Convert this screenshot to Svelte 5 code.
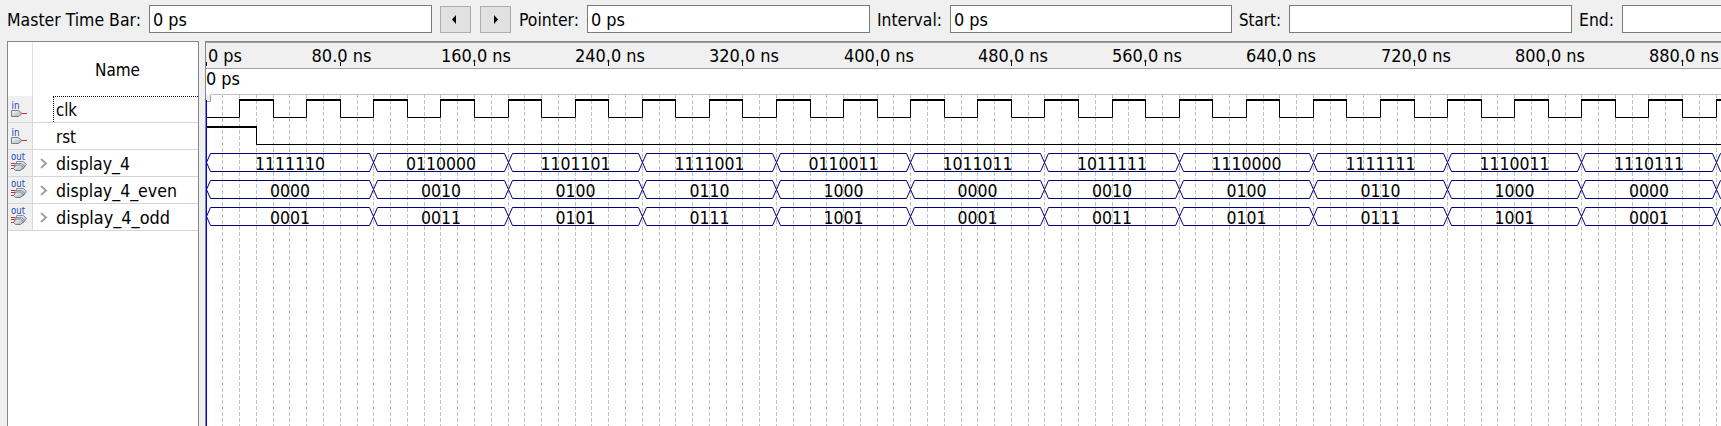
<script>
  const origin = 206;
  const unit = 16.778;
  const at = (n) => Math.floor(origin + n * unit) - 205;

  const fields = [
    { label: 'Master Time Bar:', value: '0 ps', w: 134, box: 283, gap: 8 },
    { label: 'Pointer:', value: '0 ps', w: 60, box: 283, gap: 8 },
    { label: 'Interval:', value: '0 ps', w: 65, box: 282, gap: 8, lead: 7 },
    { label: 'Start:', value: '', w: 42, box: 283, gap: 8, lead: 7 },
    { label: 'End:', value: '', w: 35, box: 283, gap: 8, lead: 7 }
  ];

  const signals = [
    { name: 'clk', out: false, w: 21 },
    { name: 'rst', out: false, w: 20 },
    { name: 'display_4', out: true, w: 74 },
    { name: 'display_4_even', out: true, w: 121 },
    { name: 'display_4_odd', out: true, w: 114 }
  ];

  const grid = Array.from({ length: 90 }, (_, i) => i + 1);
  const marks = Array.from({ length: 11 }, (_, i) => (i + 1) * 8);
  const edges = [0, 10, 18, 26, 34, 42, 50, 58, 66, 74, 82, 90, 98];

  let clock = `M1 117.5`;
  for (let n = 2; n <= 90; n += 2) {
    clock += `H${at(n) + 0.5}V${n % 4 === 2 ? 99.5 : 117.5}`;
  }
  clock += 'H1516';
  const highs = [];
  for (let n = 2; n <= 90; n += 4) highs.push([at(n), at(n + 2)]);

  const buses = [
    { y: 153, values: ['1111110', '0110000', '1101101', '1111001', '0110011', '1011011', '1011111', '1110000', '1111111', '1110011', '1110111'] },
    { y: 180, values: ['0000', '0010', '0100', '0110', '1000', '0000', '0010', '0100', '0110', '1000', '0000'] },
    { y: 207, values: ['0001', '0011', '0101', '0111', '1001', '0001', '0011', '0101', '0111', '1001', '0001'] }
  ];

  function hexes(y) {
    let d = '';
    for (let i = 0; i < edges.length - 1; i++) {
      const a = at(edges[i]) + 0.5;
      const b = at(edges[i + 1]) + 0.5;
      const t = y + 0.5;
      d += `M${a} ${t + 9}L${a + 4} ${t}H${b - 4}L${b} ${t + 9}`;
      d += `M${a} ${t + 9}L${a + 4} ${t + 18}H${b - 4}L${b} ${t + 9}`;
    }
    return d;
  }
</script>

{#snippet fit(text, w)}
  <svg class="fit" width={w} height="22"><text x="0" y="17" textLength={w} lengthAdjust="spacingAndGlyphs">{text}</text></svg>
{/snippet}

<main>
  <header>
    {#each fields as f, i}
      <label style:width="{f.w}px" style:margin-right="{f.gap}px" style:margin-left="{i ? (f.lead ?? 8) : 0}px">{@render fit(f.label, f.w)}</label>
      <div class="field" style:width="{f.box}px">{#if f.value}{@render fit(f.value, 34)}{/if}</div>
      {#if i === 0}
        <button aria-label="Previous"><svg width="29" height="25"><path d="M15 8V17L11 12.5Z" /></svg></button>
        <button aria-label="Next"><svg width="29" height="25"><path d="M13 8V17L17 12.5Z" /></svg></button>
      {/if}
    {/each}
  </header>

  <section>
    <aside>
      <div class="head"><i></i><b>{@render fit('Name', 45)}</b></div>
      {#each signals as s, i}
        <div class="row" class:focus={i === 0}>
          <div class="icon">
            <svg width="18" height="22" viewBox="0 0 18 22">
              <defs>
                <linearGradient id="metal{i}" x1="0" y1="0" x2="1" y2="1">
                  <stop offset="0" stop-color="#f8fafc" /><stop offset="1" stop-color="#a4afb9" />
                </linearGradient>
              </defs>
              {#if s.out}
                <path d="M0 10.5H4M0 12.5H4M0 15.5H3" stroke="#e0202c" fill="none" />
                <path d="M5.5 8.5H12.5L15.5 11.5L12.5 15.5H5.5Z" fill="url(#metal{i})" stroke="#7c8894" stroke-width="0.9" />
                <path d="M4 10.5H10.5L14 13.5L10.5 16.5H4Z" fill="url(#metal{i})" stroke="#7c8894" stroke-width="0.9" />
                <path d="M5 12H9.5L12.5 14.8L9.5 17.5H4.5L2.5 15.5Z" fill="url(#metal{i})" stroke="#66727e" stroke-width="0.9" />
                <text class="tag" x="0" y="7" textLength="14" lengthAdjust="spacingAndGlyphs">out</text>
              {:else}
                <text class="tag" x="0.5" y="9.5" textLength="8" lengthAdjust="spacingAndGlyphs">in</text>
                <path d="M0.5 11.5H7.5L11 14.5L7.5 17.5H0.5Z" fill="url(#metal{i})" stroke="#77818b" />
                <path d="M11 14.5H16" stroke="#e0202c" />
              {/if}
            </svg>
          </div>
          <div class="twist">
            {#if s.out}<svg width="8" height="12"><path d="M1 1L6 5.5L1 10" fill="none" stroke="#a0a0a0" stroke-width="2" /></svg>{/if}
          </div>
          <div class="name">{@render fit(s.name, s.w)}</div>
        </div>
      {/each}
    </aside>

    <svg class="wave" width="1516" height="385" viewBox="0 41 1516 385">
      <rect x="0" y="41" width="1516" height="385" fill="#fff" />
      <rect x="1" y="43" width="1515" height="25" fill="#f0f0f0" />
      <rect x="0" y="41" width="1516" height="1" fill="#828790" />
      <rect x="0" y="42" width="1516" height="1" fill="#a0a0a0" />
      <rect x="1" y="68" width="1515" height="1" fill="#a0a0a0" />
      <rect x="1" y="94" width="1515" height="1" fill="#c0c0c0" />

      {#each grid as n}
        <line x1={at(n) + 0.5} x2={at(n) + 0.5} y1="94" y2="426" stroke="#c0c0c0" stroke-dasharray="4 2" />
      {/each}

      <text x="3" y="62" textLength="34" lengthAdjust="spacingAndGlyphs">0 ps</text>
      <rect x="1" y="62" width="1" height="4" />
      {#each marks as n}
        <text x={at(n) + (n === 8 ? -28.5 : -33)} y="62" textLength={n === 8 ? 60 : 70} lengthAdjust="spacingAndGlyphs">{n * 10}.0 ns</text>
        <rect x={at(n)} y="62" width="1" height="4" />
      {/each}
      <text x="1" y="85" textLength="34" lengthAdjust="spacingAndGlyphs">0 ps</text>

      <path d={clock} fill="none" stroke="#000" />
      {#each highs as [a, b]}<rect x={a} y="99" width={b - a + 1} height="2" />{/each}
      <rect x="1" y="126" width="51" height="2" />
      <path d="M51.5 126V144.5H1516" fill="none" stroke="#000" />

      {#each buses as bus}
        <path d={hexes(bus.y)} fill="none" stroke="#000080" />
        {#each bus.values as v, i}
          <text x={(at(edges[i]) + at(edges[i + 1])) / 2 + 0.5} y={bus.y + 17} text-anchor="middle" textLength={v.length * 10} lengthAdjust="spacingAndGlyphs">{v}</text>
        {/each}
      {/each}

      <rect x="1" y="94" width="5" height="7" fill="#f0f0f0" />
      <path d="M5.5 95V101.5H1" fill="none" stroke="#a0a0a0" />
      <rect x="0" y="41" width="1" height="385" fill="#828790" />
      <rect x="1" y="100" width="1" height="326" fill="#00f" />
    </svg>
  </section>
</main>

<style>
  :global(body) { margin: 0; overflow: hidden; }
  main {
    width: 1721px; height: 426px; overflow: hidden; background: #f0f0f0;
    display: flex; flex-direction: column;
    font: 18px 'DejaVu Sans Condensed', 'DejaVu Sans', sans-serif; font-stretch: condensed; color: #000;
  }
  header { display: flex; height: 36px; padding: 5px 0 0 7px; box-sizing: border-box; flex: none; }
  svg { display: block; flex: none; }
  .fit { overflow: visible; }
  label { flex: none; padding-top: 4px; height: 24px; }
  .field { box-sizing: border-box; flex: none; height: 28px; border: 1px solid #7a7a7a; background: #fff; padding: 3px 0 0 3px; }
  button {
    box-sizing: border-box; flex: none; width: 31px; height: 27px; margin: 1px 0 0 8px; padding: 0;
    border: 1px solid #adadad; background: #e1e1e1;
  }
  button + button { margin-left: 9px; }
  section { display: flex; gap: 6px; padding: 5px 0 0 7px; flex: none; height: 385px; }
  aside { box-sizing: border-box; width: 192px; height: 386px; background: #fff; border: 1px solid #828790; border-bottom: 0; flex: none; }
  .head { display: flex; height: 54px; }
  .head i { width: 24px; border-right: 1px solid #e0e0e0; }
  .head b { font-weight: normal; padding: 17px 0 0 62px; }
  .row { display: flex; height: 27px; box-sizing: border-box; border-bottom: 1px solid #d5d5d5; }
  .icon { width: 25px; background: #f0f0f0; border-right: 1px solid #d9d9d9; padding: 3px 0 0 3px; box-sizing: border-box; }
  .twist { width: 20px; padding: 8px 0 0 7px; box-sizing: border-box; }
  .name { flex: 1; padding: 3px 0 0 3px; }
  .focus .name { border-top: 1px dotted #000; border-left: 1px dotted #000; padding: 2px 0 0 2px; }
  .tag { font: 11px 'DejaVu Sans', sans-serif; fill: #2448b0; }
</style>
